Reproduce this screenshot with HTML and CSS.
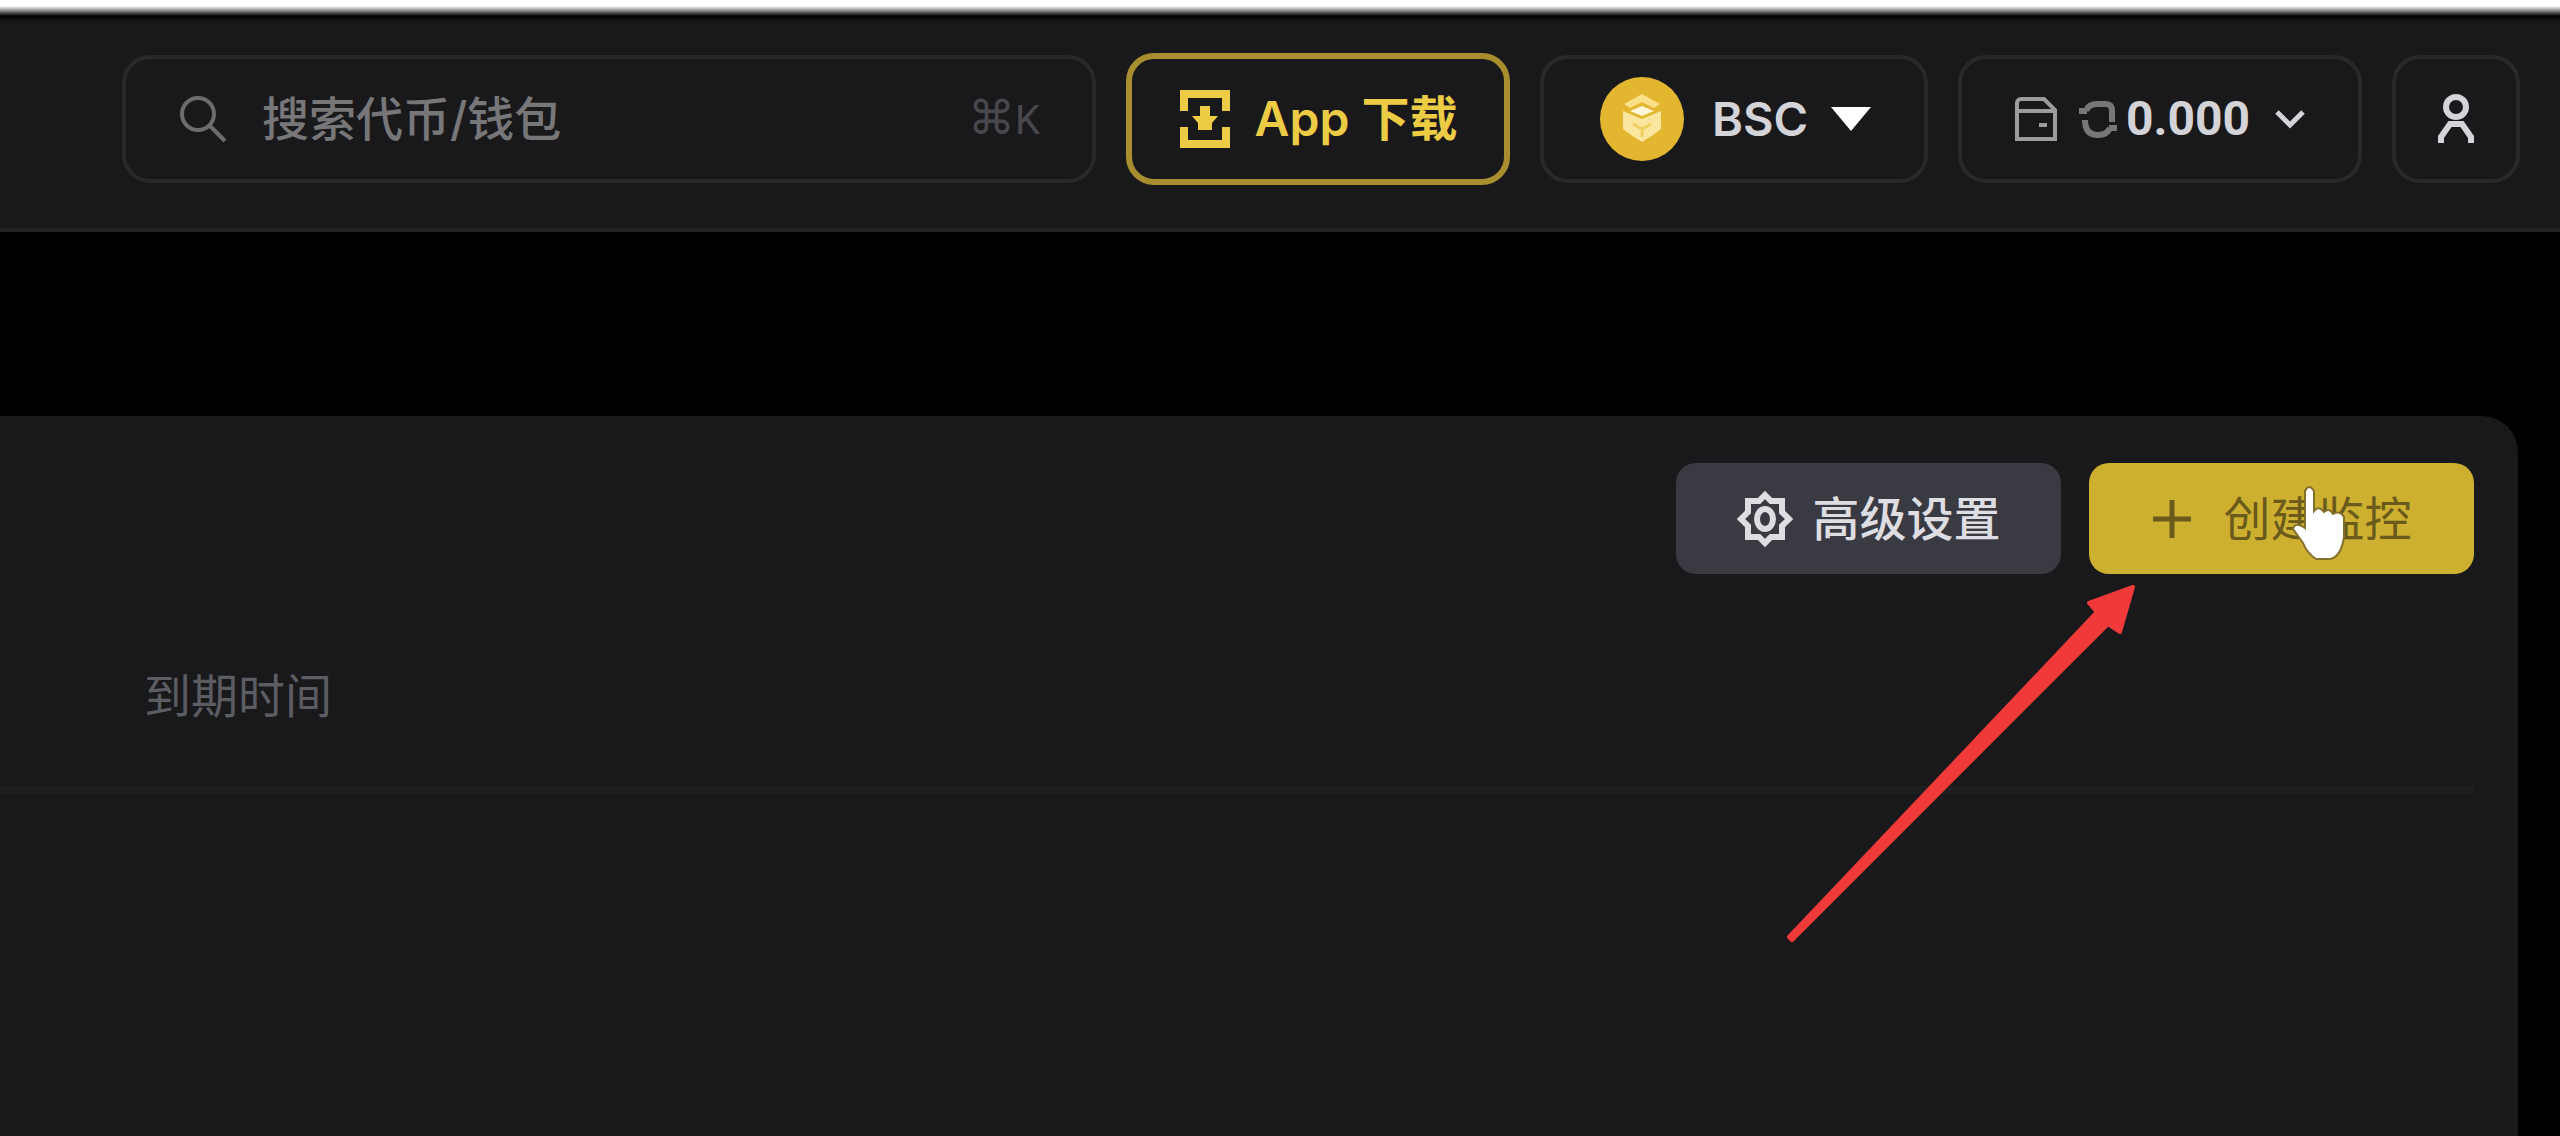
FILE: index.html
```html
<!DOCTYPE html>
<html lang="zh-CN">
<head>
  <meta charset="UTF-8">
  <meta name="viewport" content="width=device-width, initial-scale=1.0">
  <title>监控</title>
  <link rel="stylesheet" href="styles.css">
</head>
<body>

  <header class="topbar">
    <label class="box search">
      <svg class="search-icon" viewBox="0 0 50 50">
        <circle cx="20" cy="20" r="16"/>
        <path d="M32 32L47 47"/>
      </svg>
      <input type="text" placeholder="搜索代币/钱包" aria-label="搜索代币/钱包">
      <kbd>⌘<span>K</span></kbd>
    </label>

    <button class="box app-btn">
      <svg class="app-icon" viewBox="0 0 52 60">
        <path d="M5 22V5H47V22M5 38V55H47V38"/>
        <path class="fill" d="M21 17h10v10h8L33 34V41H19V34L13 27h8z"/>
      </svg>
      App 下载
    </button>

    <label class="box chain">
      <svg class="coin" viewBox="0 0 84 84">
        <circle cx="42" cy="42" r="42" fill="#e2b62e"/>
        <path d="M24 27L42 17L60 27L54 31L42 25L30 31Z" fill="#fbe08a"/>
        <path d="M23 34L42 42L61 34V52L53 58L42 65L31 58L23 52Z" fill="#fbe6a0"/>
        <path d="M30 34L42 29L54 34L42 39Z" fill="#fff6da"/>
        <path d="M33 47L42 52L51 47M42 52V60" stroke="#f0cf60" stroke-width="3" fill="none"/>
      </svg>
      <select aria-label="网络">
        <option>BSC</option>
      </select>
      <svg class="caret" viewBox="0 0 42 26"><path d="M1 1H41L21 25Z"/></svg>
    </label>

    <button class="box wallet" aria-haspopup="true">
      <svg class="wallet-icon" viewBox="0 0 44 46">
        <path d="M3 43V7a4 4 0 0 1 4-4H30L41 14V43ZM3 15H41M33 29H25"/>
      </svg>
      <svg class="sync-icon" viewBox="0 0 40 42">
        <path d="M1 13H9M8 13Q10 6 20 6H28Q34 6 34 13V24M39 30H31M32 30Q29 37 20 37Q7 37 7 22"/>
      </svg>
      <span class="amount">0.000</span>
      <svg class="chevron" viewBox="0 0 32 20"><path d="M3 3L16 16L29 3"/></svg>
    </button>

    <button class="box user" aria-label="账户">
      <svg viewBox="0 0 40 52">
        <circle cx="20" cy="14" r="10"/>
        <path d="M5 50V44L14 31H26L35 44V50"/>
      </svg>
    </button>
  </header>

  <main class="panel">
    <div class="actions">
      <button class="btn settings">
        <svg viewBox="0 0 56 56">
          <path d="M28 4L34 10H45V21L52 28L45 35V46H34L28 52L22 46H11V35L4 28L11 21V10H22Z"/>
          <ellipse cx="28" cy="28" rx="8" ry="10"/>
        </svg>
        高级设置
      </button>
      <div class="create-wrap">
        <button class="btn create">
          <svg viewBox="0 0 40 40"><path d="M20 1V39M1 20H39"/></svg>
          创建监控
        </button>
        <svg class="cursor" viewBox="0 0 60 80">
          <path d="M14 8Q18 0 23 8V28Q28 22 33 29Q38 24 42 31Q49 27 53 34V54Q50 74 39 76H25Q16 70 12 60L2 46Q4 38 14 45Z"/>
        </svg>
        <svg class="arrow" viewBox="0 0 360 370">
          <path d="M353 7L309 23L317 32L9 357L12 360L328 44L340 52Z"/>
        </svg>
      </div>
    </div>

    <table>
      <thead>
        <tr><th>到期时间</th></tr>
      </thead>
    </table>
  </main>

</body>
</html>
```

FILE: styles.css
```css
* {
  margin: 0;
  padding: 0;
  box-sizing: border-box;
}

body {
  min-height: 100vh;
  display: flex;
  flex-direction: column;
  background: #000;
  color: #d4d4d8;
  font-family: Inter, "Noto Sans CJK SC", sans-serif;
  font-size: 47px;
  line-height: 56px;
}

button, input, select, kbd {
  font: inherit;
  color: inherit;
  background: none;
  border: none;
}

button {
  cursor: pointer;
}

svg {
  flex: none;
  fill: none;
  stroke: currentColor;
}

/* Header */
.topbar {
  display: flex;
  align-items: center;
  gap: 30px;
  height: 232px;
  padding: 10px 40px 0 122px;
  background: linear-gradient(#fff 6px, #000 16px, #19191b 22px);
  border-bottom: 4px solid #232325;
}

.box {
  display: flex;
  align-items: center;
  height: 128px;
  border: 4px solid #29292b;
  border-radius: 28px;
  background: #19191b;
}

.search {
  flex: 1;
  min-width: 0;
  padding: 0 52px;
  color: #6c6c6e;
}

.search-icon {
  width: 50px;
  height: 50px;
  margin-right: 34px;
  stroke-width: 4;
}

.search input {
  flex: 1;
  min-width: 0;
  outline: none;
}

.search input::placeholder {
  color: #777779;
  font-weight: 500;
  opacity: 1;
}

.search kbd {
  color: #48484c;
  font-family: "DejaVu Sans", sans-serif;
}

.search kbd span {
  font-family: Roboto, sans-serif;
  font-size: 40px;
}

.app-btn {
  width: 384px;
  height: 132px;
  justify-content: center;
  gap: 24px;
  border: 6px solid #a88e2e;
  color: #eccb45;
  font-size: 48px;
  font-weight: 600;
}

.app-icon {
  width: 52px;
  height: 60px;
  stroke-width: 8;
}

.app-icon .fill {
  fill: currentColor;
  stroke: none;
}

.chain {
  width: 388px;
  padding: 0 52px 0 56px;
  font-weight: 600;
}

.coin {
  width: 84px;
  height: 84px;
  margin-right: 28px;
  stroke: none;
}

.chain select {
  flex: 1;
  min-width: 0;
  appearance: none;
  outline: none;
}

.caret {
  width: 42px;
  height: 26px;
  fill: #fff;
  stroke: none;
}

.wallet {
  width: 404px;
  justify-content: center;
}

.wallet-icon {
  width: 44px;
  height: 46px;
  margin-right: 20px;
  color: #9c9c9e;
  stroke-width: 4;
}

.sync-icon {
  width: 40px;
  height: 42px;
  margin-right: 8px;
  color: #77777a;
  stroke-width: 6;
}

.amount {
  font-family: Roboto, sans-serif;
  font-size: 48px;
  font-weight: 700;
}

.chevron {
  width: 32px;
  height: 20px;
  margin-left: 24px;
  stroke-width: 5;
}

.user {
  width: 128px;
  justify-content: center;
}

.user svg {
  width: 40px;
  height: 52px;
  stroke-width: 6;
}

/* Panel */
.panel {
  flex: 1;
  margin: 184px 42px 0 0;
  padding: 47px 44px 0 0;
  background: #19191b;
  border-top-right-radius: 36px;
}

.actions {
  display: flex;
  justify-content: flex-end;
  gap: 28px;
}

.create-wrap {
  position: relative;
}

.btn {
  display: flex;
  align-items: center;
  justify-content: center;
  width: 385px;
  height: 111px;
  border-radius: 20px;
}

.settings {
  gap: 20px;
  background: #3a3b42;
  color: #dedee2;
  font-weight: 500;
}

.settings svg {
  width: 56px;
  height: 56px;
  stroke-width: 6;
}

.create {
  gap: 32px;
  background: #ceb030;
  color: #6a5a1c;
}

.create svg {
  width: 40px;
  height: 40px;
  stroke-width: 5;
}

/* Pointer and arrow lie over the create button */
.cursor {
  position: absolute;
  top: 20px;
  left: 202px;
  width: 60px;
  height: 80px;
  fill: #fff;
  stroke: #84702a;
  stroke-width: 2;
}

.arrow {
  position: absolute;
  top: 117px;
  right: 334px;
  width: 360px;
  height: 370px;
  fill: #f03a3a;
  stroke: #f03a3a;
  stroke-width: 4;
  stroke-linejoin: round;
  pointer-events: none;
}

table {
  width: 100%;
  margin-top: 32px;
  border-collapse: collapse;
}

th {
  padding: 62px 144px;
  border-bottom: 8px solid #1e1e20;
  color: #5c5d62;
  font-weight: 400;
  text-align: left;
}
```
